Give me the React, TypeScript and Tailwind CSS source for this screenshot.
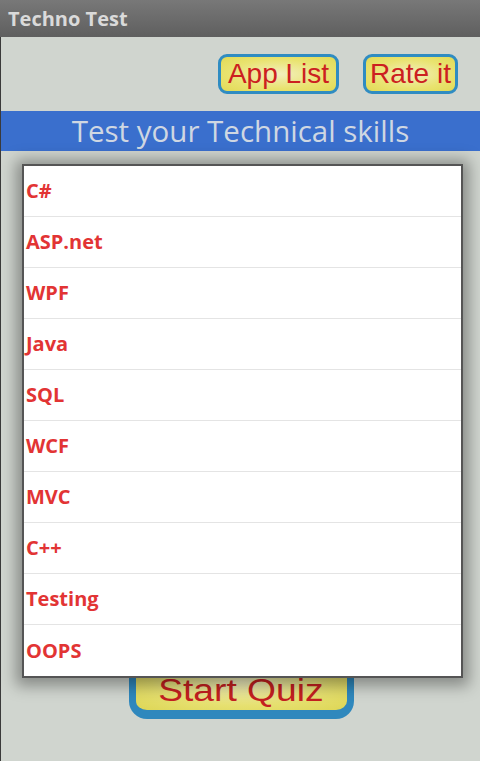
export default function App() {
  const topics = ["C#", "ASP.net", "WPF", "Java", "SQL", "WCF", "MVC", "C++", "Testing", "OOPS"];

  return (
    <div className="relative flex h-[761px] w-[480px] flex-col overflow-hidden bg-[#d0d5cf] font-['Open_Sans',sans-serif]">
      <header className="flex h-[37px] shrink-0 items-center bg-gradient-to-b from-[#787878] to-[#5f5f5f] pl-[8px]">
        <span className="text-[20px] font-bold leading-none text-[#dadada]">Techno Test</span>
      </header>

      <div className="flex-1 border-l border-[#3a3a3a]">
        <div className="flex h-[74px] items-start justify-end gap-[24px] pr-[22px] pt-[17px] font-['Liberation_Sans',Arial,sans-serif]">
          <button className="flex h-[40px] w-[121px] items-center justify-center rounded-[9px] border-[3px] border-[#2f8cc2] bg-[radial-gradient(ellipse_at_center,#f2efbe_0%,#e9e370_60%,#e2da55_100%)] text-[28px] leading-none text-[#cc2020]">
            App List
          </button>
          <button className="flex h-[40px] w-[95px] items-center justify-center rounded-[9px] border-[3px] border-[#2f8cc2] bg-[radial-gradient(ellipse_at_center,#f2efbe_0%,#e9e370_60%,#e2da55_100%)] text-[28px] leading-none text-[#cc2020]">
            Rate it
          </button>
        </div>

        <div className="flex h-[40px] items-center justify-center bg-[#3a6fcd] text-[29.5px] leading-none text-[#cfd7e2]">
          Test your Technical skills
        </div>

        <div className="flex justify-center pt-[502px]">
          <div className="ml-[1px] flex h-[66px] w-[225px] items-end justify-center rounded-b-[18px] border-x-[7px] border-b-[9px] border-[#2f88bd] bg-[radial-gradient(ellipse_at_center,#f0eebf_0%,#e6e070_60%,#ddd655_100%)] pb-[4px] font-['Liberation_Sans',Arial,sans-serif] text-[31px] leading-none text-[#c42020]">
            <span className="inline-block scale-x-[1.2]">Start Quiz</span>
          </div>
        </div>
      </div>

      <div className="absolute left-[22px] top-[164px] w-[441px] border-2 border-[#555555] bg-white shadow-[0_2px_14px_6px_rgba(0,0,0,0.35)]">
        {topics.map((t, i) => (
          <div
            key={t}
            className={`flex h-[51px] items-center pl-[2px] text-[20px] font-bold text-[#e23434] ${
              i < topics.length - 1 ? "border-b border-[#e4e4e4]" : ""
            }`}
          >
            {t}
          </div>
        ))}
      </div>
    </div>
  );
}
